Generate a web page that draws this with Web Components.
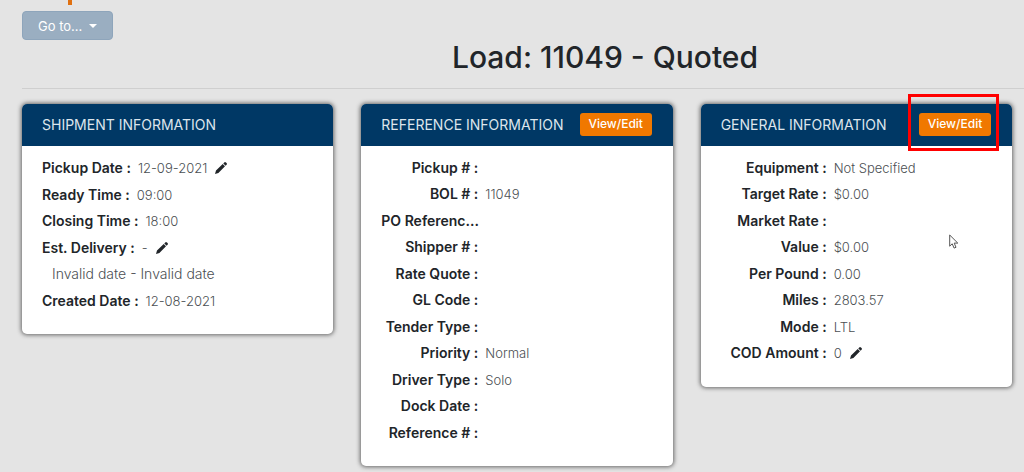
<!DOCTYPE html>
<html lang="en">
<head>
<meta charset="utf-8">
<title>Load: 11049 - Quoted</title>
<style>
body { margin: 0; background: #e4e4e4; color: #212529; font: 400 13px/20px Inter, "Open Sans", sans-serif; }
</style>
</head>
<body>
<load-page></load-page>
<script>
class GoToMenu extends HTMLElement {
  constructor() {
    super();
    this.attachShadow({ mode: 'open' }).innerHTML = `
      <style>
        :host { display: block; }
        button { display: flex; align-items: center; gap: 7px; box-sizing: border-box; height: 29px; padding: 0 15px;
          border: 1px solid #8ea5bb; border-radius: 4px; background: #9aaec1; color: #fff; font: inherit; line-height: 20px; }
        i { border: 4px solid transparent; border-top-color: #fff; border-bottom: 0; }
      </style>
      <button type="button" aria-haspopup="true"><slot></slot><i></i></button>`;
  }
}
customElements.define('go-to-menu', GoToMenu);

class EditPencil extends HTMLElement {
  constructor() {
    super();
    this.attachShadow({ mode: 'open' }).innerHTML = `
      <style>
        :host { display: inline-block; margin-left: 8px; vertical-align: top; }
        button { display: flex; align-items: center; height: 26px; padding: 0; border: 0; background: none; color: #212529; }
        svg { display: block; }
      </style>
      <button type="button" aria-label="Edit">
        <svg width="12" height="12" viewBox="0 0 12 12" fill="currentColor">
          <path d="M0 12 1 8.6 7.7 2 10 4.3 3.4 11zM8.3 1.4 9.2.5Q10-.3 10.9.4l.7.7Q12.3 2 11.5 2.8l-.9.9z"/>
        </svg>
      </button>`;
  }
}
customElements.define('edit-pencil', EditPencil);

class EditButton extends HTMLElement {
  constructor() {
    super();
    this.attachShadow({ mode: 'open' }).innerHTML = `
      <style>
        :host { display: block; position: relative; margin-bottom: 2px; }
        button { display: block; box-sizing: border-box; width: 72px; height: 23px; padding: 0; border: 0; border-radius: 3px;
          background: #f07800; color: #fff; font: inherit; font-size: 12px; font-weight: 500; line-height: 22px; }
        span { display: none; }
        :host([highlighted]) span { display: block; position: absolute; inset: -19px -8px -15px -11px; border: 3px solid #f00; pointer-events: none; }
      </style>
      <button type="button"><slot></slot></button><span></span>`;
  }
}
customElements.define('edit-button', EditButton);

class InfoRow extends HTMLElement {
  constructor() {
    super();
    this.attachShadow({ mode: 'open' }).innerHTML = `
      <style>
        :host { display: flex; height: 26px; line-height: 26px; white-space: nowrap; }
        :host(:nth-child(even)) { height: 27px; }
        .label { flex: none; width: var(--label-width, auto); text-align: right; font-size: 14px; font-weight: 600; }
        .value { padding-left: 7px; color: #4b4f53; font-weight: 300; }
        :host([plain]) .value { padding-left: 10px; font-size: 14px; }
        :host([clipped]) .label { text-align: left; }
      </style>
      <span class="label"><slot name="label"></slot></span><span class="value"><slot></slot></span>`;
  }
}
customElements.define('info-row', InfoRow);

class InfoCard extends HTMLElement {
  constructor() {
    super();
    this.attachShadow({ mode: 'open' }).innerHTML = `
      <style>
        :host { display: block; min-width: 0; border-radius: 5px; background: #fff; box-shadow: 0 0 4px 1px #666; }
        header { display: flex; align-items: center; justify-content: space-between; height: 42px; padding: 0 21px 0 20px;
          border-radius: 5px 5px 0 0; background: #003865; color: #dde5ec; }
        h2 { margin: 0; font-size: 14px; font-weight: 400; line-height: 20px; white-space: nowrap; }
        .rows { padding: 9px 20px 20px; }
      </style>
      <header><h2><slot name="title"></slot></h2><slot name="action"></slot></header>
      <div class="rows"><slot></slot></div>`;
  }
}
customElements.define('info-card', InfoCard);

class MousePointer extends HTMLElement {
  constructor() {
    super();
    this.attachShadow({ mode: 'open' }).innerHTML = `
      <style>:host { display: block; position: absolute; left: 248px; top: 130px; pointer-events: none; } svg { display: block; }</style>
      <svg width="10" height="16" viewBox="0 0 10 16"><path d="M.7 1v11.2l2.5-2.4 1.9 4.3 1.9-.8-1.8-4.2h3.6z" fill="#fff" stroke="#555" stroke-width="1"/></svg>`;
  }
}
customElements.define('mouse-pointer', MousePointer);

class LoadPage extends HTMLElement {
  constructor() {
    super();
    this.attachShadow({ mode: 'open' }).innerHTML = `
      <style>
        :host { display: block; padding-left: 22px; }
        .tab { width: 4px; height: 5px; margin: 0 0 6px 46px; background: #e07010; }
        .bar { display: flex; }
        h1 { margin: 0; padding-left: 164px; text-align: center; font-size: 30px; font-weight: 500; line-height: 34px; }
        hr { margin: 14px 0 15px; border: 0; border-top: 1px solid #cfcfcf; }
        main { display: grid; grid-template-columns: repeat(3, minmax(0, 1fr)); gap: 28px; align-items: start; padding: 0 12px 6px 0; }
        .reference { --label-width: 97px; }
        .general { --label-width: 106px; position: relative; }
      </style>
      <div class="tab"></div>
      <div class="bar"><go-to-menu>Go to...</go-to-menu></div>
      <h1>Load: 11049 - Quoted</h1>
      <hr>
      <main>
        <info-card>
          <span slot="title">SHIPMENT INFORMATION</span>
          <info-row><span slot="label">Pickup Date :</span>12-09-2021<edit-pencil></edit-pencil></info-row>
          <info-row><span slot="label">Ready Time :</span>09:00</info-row>
          <info-row><span slot="label">Closing Time :</span>18:00</info-row>
          <info-row><span slot="label">Est. Delivery :</span>-<edit-pencil></edit-pencil></info-row>
          <info-row plain>Invalid date - Invalid date</info-row>
          <info-row><span slot="label">Created Date :</span>12-08-2021</info-row>
        </info-card>
        <info-card class="reference">
          <span slot="title">REFERENCE INFORMATION</span>
          <edit-button slot="action">View/Edit</edit-button>
          <info-row><span slot="label">Pickup # :</span></info-row>
          <info-row><span slot="label">BOL # :</span>11049</info-row>
          <info-row clipped><span slot="label">PO Referenc...</span></info-row>
          <info-row><span slot="label">Shipper # :</span></info-row>
          <info-row><span slot="label">Rate Quote :</span></info-row>
          <info-row><span slot="label">GL Code :</span></info-row>
          <info-row><span slot="label">Tender Type :</span></info-row>
          <info-row><span slot="label">Priority :</span>Normal</info-row>
          <info-row><span slot="label">Driver Type :</span>Solo</info-row>
          <info-row><span slot="label">Dock Date :</span></info-row>
          <info-row><span slot="label">Reference # :</span></info-row>
        </info-card>
        <info-card class="general">
          <span slot="title">GENERAL INFORMATION</span>
          <edit-button slot="action" highlighted>View/Edit</edit-button>
          <info-row><span slot="label">Equipment :</span>Not Specified</info-row>
          <info-row><span slot="label">Target Rate :</span>$0.00</info-row>
          <info-row><span slot="label">Market Rate :</span></info-row>
          <info-row><span slot="label">Value :</span>$0.00</info-row>
          <info-row><span slot="label">Per Pound :</span>0.00</info-row>
          <info-row><span slot="label">Miles :</span>2803.57</info-row>
          <info-row><span slot="label">Mode :</span>LTL</info-row>
          <info-row><span slot="label">COD Amount :</span>0<edit-pencil></edit-pencil></info-row>
          <mouse-pointer></mouse-pointer>
        </info-card>
      </main>`;
  }
}
customElements.define('load-page', LoadPage);
</script>
</body>
</html>
